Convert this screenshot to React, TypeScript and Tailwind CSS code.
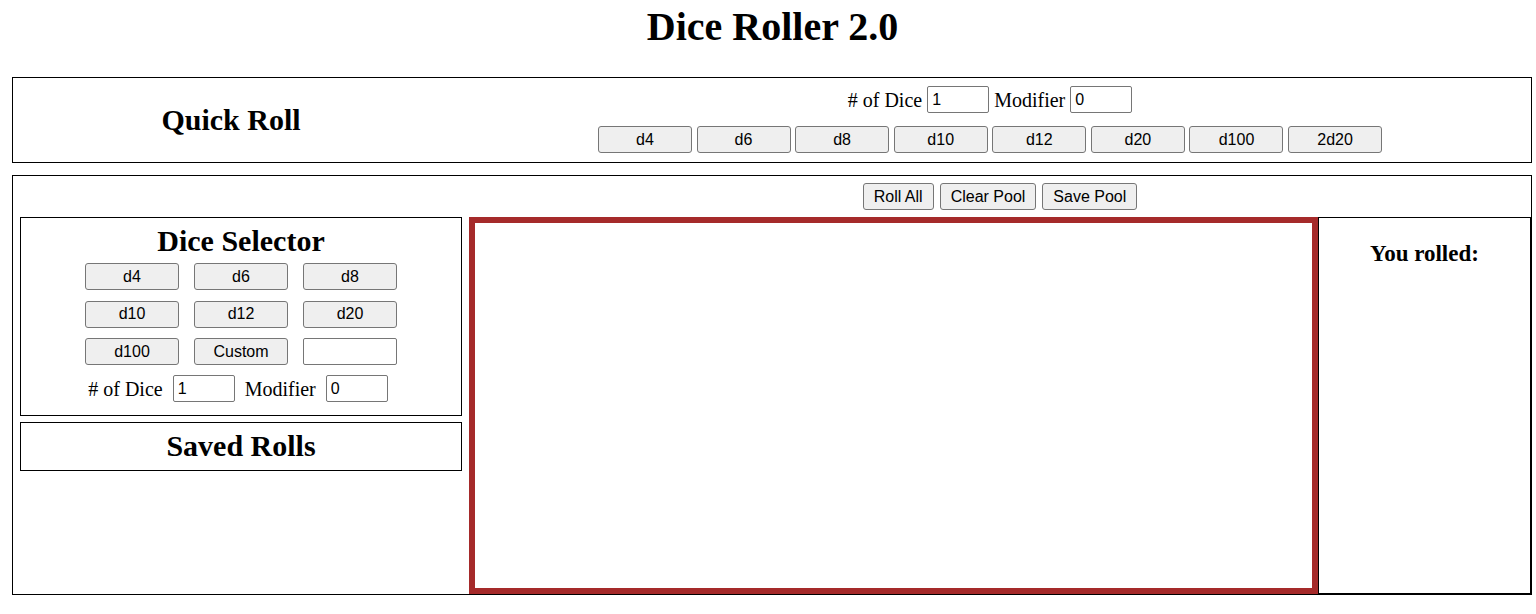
import React from "react";

const btn =
  "h-[27px] w-[94px] bg-[#efefef] border border-[#767676] rounded-[3px] text-[16px] leading-[18px] text-black [font-family:'Liberation_Sans',Arial,sans-serif]";
const inp =
  "h-[27px] w-[62px] border border-[#767676] rounded-[2px] px-[4px] text-[16px] text-black bg-white [font-family:'Liberation_Sans',Arial,sans-serif] outline-none";
const smallBtn =
  "h-[27px] px-[10px] bg-[#efefef] border border-[#767676] rounded-[3px] text-[16px] leading-[18px] text-black [font-family:'Liberation_Sans',Arial,sans-serif]";

export default function App() {
  const quick = ["d4", "d6", "d8", "d10", "d12", "d20", "d100", "2d20"];
  return (
    <div className="min-h-[614px] bg-white text-black [font-family:'Liberation_Serif','Times_New_Roman',serif]">
      <div className="ml-[12px] w-[1520px]">
        <h1 className="pt-[4px] pl-[1px] text-center text-[40px] font-bold leading-[46px]">
          Dice Roller 2.0
        </h1>

        {/* Quick Roll */}
        <div className="mt-[27px] flex h-[86px] border border-black">
          <div className="flex w-[436px] items-center justify-center">
            <h2 className="text-[30px] font-bold leading-[34px]">Quick Roll</h2>
          </div>
          <div className="flex flex-1 flex-col items-center pt-[8px]">
            <div className="flex h-[27px] items-center gap-[5px] text-[20px]">
              <span>#&nbsp;of Dice</span>
              <input className={inp} defaultValue="1" />
              <span>Modifier</span>
              <input className={inp} defaultValue="0" />
            </div>
            <div className="mt-[13px] flex gap-[4.6px]">
              {quick.map((d) => (
                <button key={d} className={btn}>
                  {d}
                </button>
              ))}
            </div>
          </div>
        </div>

        {/* Main */}
        <div className="mt-[12px] flex h-[420px] flex-col border border-black">
          <div className="flex pt-[7px] pb-[7px]">
            <div className="w-[456px]" />
            <div className="flex flex-1 justify-center gap-[6px]">
              <button className={smallBtn}>Roll All</button>
              <button className={smallBtn}>Clear Pool</button>
              <button className={smallBtn}>Save Pool</button>
            </div>
          </div>
          <div className="flex flex-1">
            <div className="w-[456px] px-[7px]">
              <div className="flex h-[199px] flex-col items-center border border-black pt-[6px]">
                <h2 className="text-[30px] font-bold leading-[34px]">Dice Selector</h2>
                <div className="mt-[5px] grid grid-cols-[94px_94px_94px] gap-x-[15px] gap-y-[10.5px]">
                  {["d4", "d6", "d8", "d10", "d12", "d20", "d100", "Custom"].map((d) => (
                    <button key={d} className={btn}>
                      {d}
                    </button>
                  ))}
                  <input className={inp + " !w-[94px]"} />
                </div>
                <div className="mt-[10px] mr-[6px] flex h-[27px] items-center gap-[10px] text-[20px]">
                  <span>#&nbsp;of Dice</span>
                  <input className={inp} defaultValue="1" />
                  <span>Modifier</span>
                  <input className={inp} defaultValue="0" />
                </div>
              </div>
              <div className="mt-[6px] flex h-[49px] justify-center border border-black pt-[6px]">
                <h2 className="text-[30px] font-bold leading-[34px]">Saved Rolls</h2>
              </div>
            </div>
            <div className="w-[849px] border-[6px] border-[#a52a2a]" />
            <div className="w-[213px] border border-black pt-[22px] text-center">
              <h3 className="text-[23px] font-bold leading-[27px]">You rolled:</h3>
            </div>
          </div>
        </div>
      </div>
    </div>
  );
}
